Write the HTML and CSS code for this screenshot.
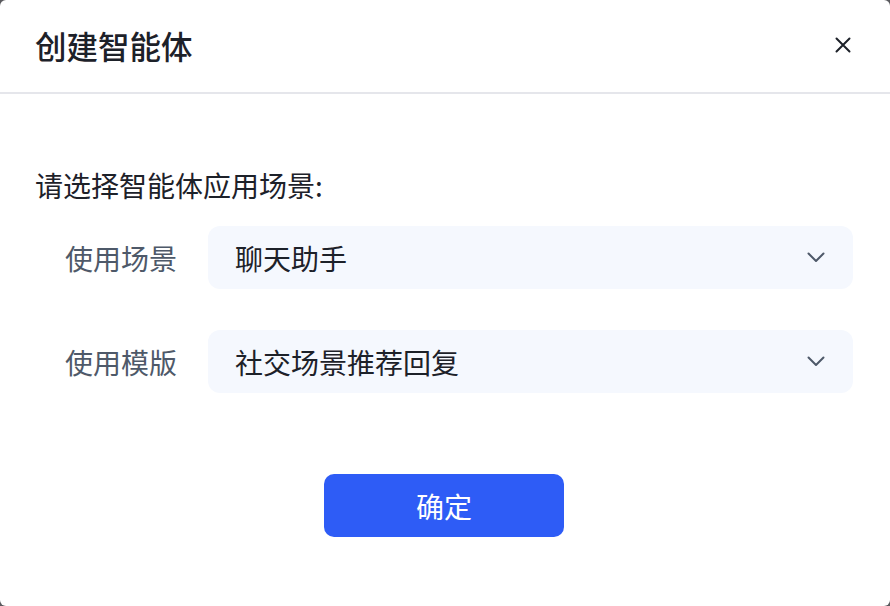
FILE: index.html
```html
<!DOCTYPE html>
<html lang="zh-CN">
<head>
<meta charset="utf-8">
<title>创建智能体</title>
<link rel="stylesheet" href="styles.css">
</head>
<body>
<div class="dialog">
  <div class="dialog-header">
    <h1 class="dialog-title">创建智能体</h1>
    <button class="close-btn" aria-label="关闭">
      <svg width="16" height="16" viewBox="0 0 16 16"><path d="M1.5 1.5 L14.5 14.5 M14.5 1.5 L1.5 14.5" stroke="#1d2129" stroke-width="2" stroke-linecap="round" fill="none"/></svg>
    </button>
  </div>
  <div class="dialog-body">
    <p class="subtitle">请选择智能体应用场景:</p>
    <div class="form">
      <div class="form-row">
        <span class="form-label">使用场景</span>
        <div class="select">
          <span class="select-value">聊天助手</span>
          <svg class="chevron" width="18" height="11" viewBox="0 0 18 11"><path d="M1.5 1.5 L9 9 L16.5 1.5" stroke="#4e5969" stroke-width="2" stroke-linecap="round" stroke-linejoin="round" fill="none"/></svg>
        </div>
      </div>
      <div class="form-row">
        <span class="form-label">使用模版</span>
        <div class="select">
          <span class="select-value">社交场景推荐回复</span>
          <svg class="chevron" width="18" height="11" viewBox="0 0 18 11"><path d="M1.5 1.5 L9 9 L16.5 1.5" stroke="#4e5969" stroke-width="2" stroke-linecap="round" stroke-linejoin="round" fill="none"/></svg>
        </div>
      </div>
    </div>
    <div class="actions">
      <button class="primary-btn">确定</button>
    </div>
  </div>
</div>
</body>
</html>
```

FILE: styles.css
```css
* { box-sizing: border-box; }
html, body { margin: 0; padding: 0; }
body {
  background: #5a5a5e;
  font-family: "Noto Sans CJK SC", "Noto Sans", sans-serif;
  width: 890px;
  height: 606px;
  overflow: hidden;
}
.dialog {
  width: 890px;
  height: 606px;
  background: #ffffff;
  border-radius: 6px;
  display: flex;
  flex-direction: column;
}
.dialog-header {
  height: 94px;
  border-bottom: 2px solid #e5e6eb;
  display: flex;
  align-items: center;
  justify-content: space-between;
  padding: 0 39px 2px 35px;
}
.dialog-title {
  margin: 0;
  font-size: 31.5px;
  font-weight: 500;
  color: #1d2129;
  line-height: 40px;
}
.close-btn {
  border: 0;
  background: transparent;
  padding: 0;
  width: 16px;
  height: 16px;
  display: flex;
}
.dialog-body {
  padding: 71px 37px 0 35px;
  display: flex;
  flex-direction: column;
}
.subtitle {
  margin: 0;
  font-size: 28px;
  line-height: 40px;
  color: #1d2129;
}
.form {
  margin-top: 21px;
  display: flex;
  flex-direction: column;
  gap: 41px;
}
.form-row {
  display: flex;
  align-items: center;
  padding-left: 30px;
}
.form-label {
  width: 143px;
  font-size: 28px;
  color: #4e5969;
  line-height: 40px;
}
.select {
  flex: 1;
  height: 63px;
  background: #f5f8fe;
  border-radius: 12px;
  display: flex;
  align-items: center;
  justify-content: space-between;
  padding: 0 28px 0 27px;
}
.select-value {
  font-size: 28px;
  color: #1d2129;
  line-height: 40px;
}
.chevron { display: block; }
.actions {
  margin-top: 81px;
  display: flex;
  justify-content: center;
}
.primary-btn {
  width: 240px;
  height: 63px;
  border: 0;
  border-radius: 10px;
  background: #2e5cf6;
  color: #ffffff;
  font-family: inherit;
  font-size: 28px;
}
```
